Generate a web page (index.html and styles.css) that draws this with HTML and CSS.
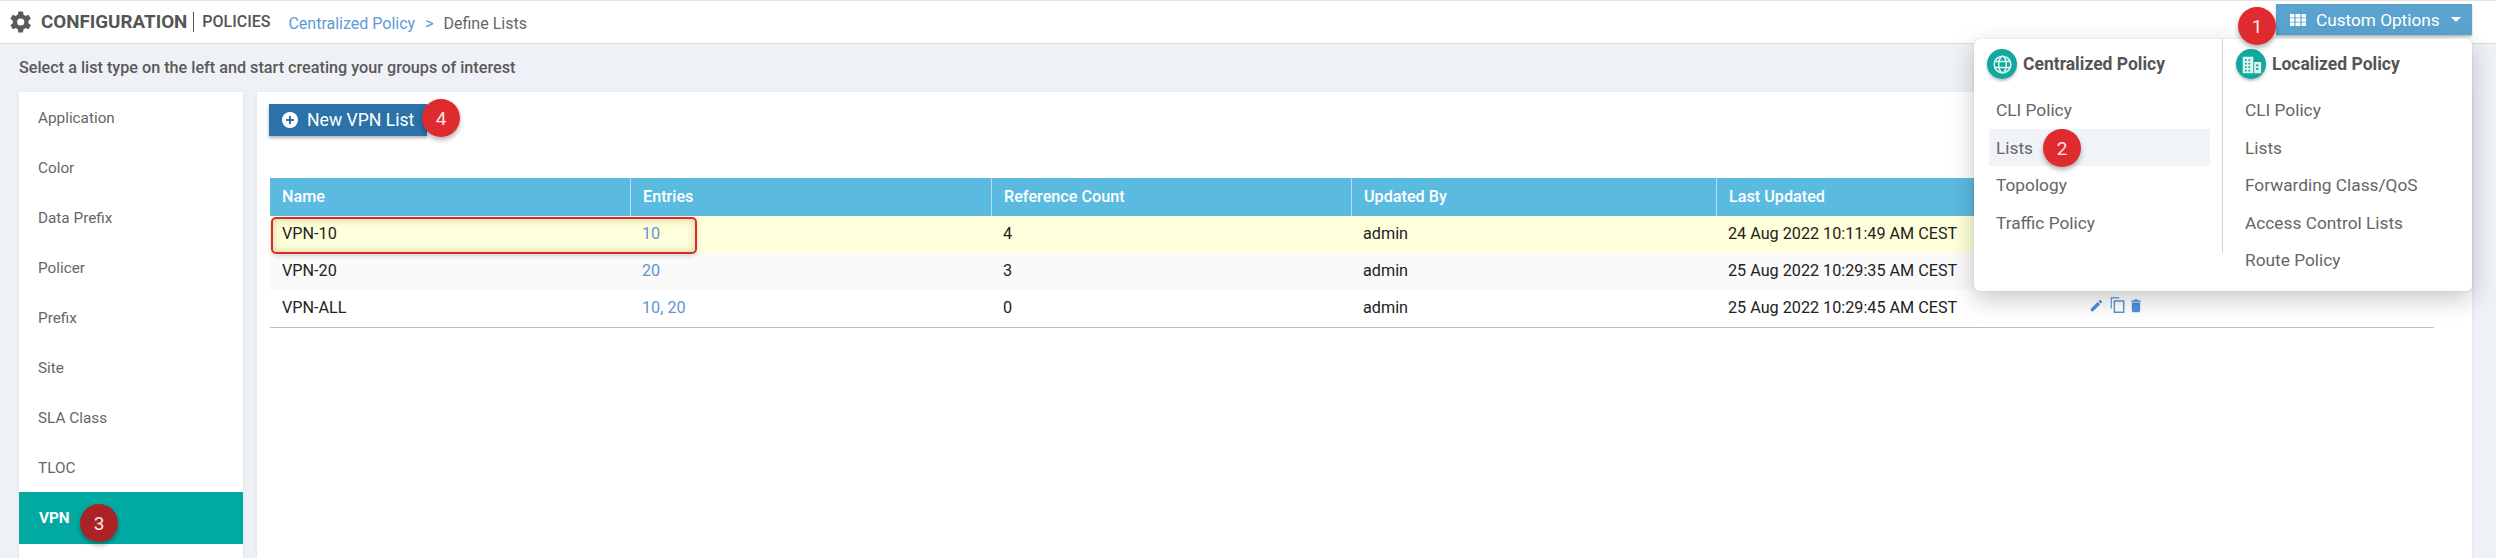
FILE: index.html
```html
<!DOCTYPE html>
<html lang="en">
<head>
<meta charset="utf-8">
<title>Define Lists</title>
<link rel="stylesheet" href="styles.css">
</head>
<body>
<header class="topbar">
  <svg class="gear" viewBox="0 0 24 24"><path fill="#5a5a5a" d="M19.4 13.2c.1-.4.1-.8.1-1.2s0-.8-.1-1.2l2.5-2-2.4-4.1-3 1.2c-.6-.5-1.3-.9-2-1.2L14 1.5H9.3l-.5 3.2c-.7.3-1.4.7-2 1.2l-3-1.2-2.4 4.1 2.5 2c-.1.4-.1.8-.1 1.2s0 .8.1 1.2l-2.5 2 2.4 4.1 3-1.2c.6.5 1.3.9 2 1.2l.5 3.2H14l.5-3.2c.7-.3 1.4-.7 2-1.2l3 1.2 2.4-4.1-2.5-2zM11.7 15.6a3.6 3.6 0 1 1 0-7.2 3.6 3.6 0 0 1 0 7.2z"/></svg>
  <span class="title">CONFIGURATION</span>
  <span class="title-sub">POLICIES</span>
  <nav class="crumbs"><a class="crumb-link">Centralized Policy</a><span class="crumb-sep">&gt;</span><span class="crumb-now">Define Lists</span></nav>
  <button class="options-btn">
    <svg class="grid-icon" viewBox="0 0 16 12"><path fill="#fff" d="M0 0h4.4v3.4H0zM5.6 0h4.8v3.4H5.6zM11.6 0H16v3.4h-4.4zM0 4.3h4.4v3.4H0zM5.6 4.3h4.8v3.4H5.6zM11.6 4.3H16v3.4h-4.4zM0 8.6h4.4V12H0zM5.6 8.6h4.8V12H5.6zM11.6 8.6H16V12h-4.4z"/></svg>
    <span>Custom Options</span>
    <i class="caret"></i>
  </button>
</header>

<p class="hint">Select a list type on the left and start creating your groups of interest</p>

<div class="content">
  <aside class="sidebar">
    <div class="side-item">Application</div>
    <div class="side-item">Color</div>
    <div class="side-item">Data Prefix</div>
    <div class="side-item">Policer</div>
    <div class="side-item">Prefix</div>
    <div class="side-item">Site</div>
    <div class="side-item">SLA Class</div>
    <div class="side-item">TLOC</div>
    <div class="side-item active">VPN</div>
  </aside>

  <main class="panel">
    <button class="new-btn">
      <svg class="plus-icon" viewBox="0 0 16 16"><circle cx="8" cy="8" r="8" fill="#fff"/><path fill="#2a72a8" d="M7 4h2v3h3v2H9v3H7V9H4V7h3z"/></svg>
      <span>New VPN List</span>
    </button>
    <div class="table">
      <div class="row head">
        <div class="cell">Name</div><div class="cell">Entries</div><div class="cell">Reference Count</div><div class="cell">Updated By</div><div class="cell">Last Updated</div><div class="cell"></div>
      </div>
      <div class="row yellow">
        <div class="cell">VPN-10</div><div class="cell link">10</div><div class="cell">4</div><div class="cell">admin</div><div class="cell">24 Aug 2022 10:11:49 AM CEST</div><div class="cell"></div>
      </div>
      <div class="row grey">
        <div class="cell">VPN-20</div><div class="cell link">20</div><div class="cell">3</div><div class="cell">admin</div><div class="cell">25 Aug 2022 10:29:35 AM CEST</div><div class="cell"></div>
      </div>
      <div class="row">
        <div class="cell">VPN-ALL</div><div class="cell link">10, 20</div><div class="cell">0</div><div class="cell">admin</div><div class="cell">25 Aug 2022 10:29:45 AM CEST</div>
        <div class="cell actions">
          <svg class="act act-edit" viewBox="0 0 24 24"><path fill="#4a8fe0" d="M3 17.2V21h3.8L17.8 9.9l-3.7-3.7zM20.7 7c.4-.4.4-1 0-1.400l-2.300-2.300c-.4-.4-1-.4-1.400 0l-1.800 1.800 3.700 3.700z"/></svg>
          <svg class="act act-copy" viewBox="0 0 16 18"><path fill="none" stroke="#5b93d8" stroke-width="1.300" d="M1 13V1h9"/><path fill="none" stroke="#5b93d8" stroke-width="1.600" d="M4.500 4.500h10.500v12.700H4.500z"/></svg>
          <svg class="act act-trash" viewBox="0 0 12 16"><path fill="#4a8fe0" d="M1 4.500h10V14c0 1-.8 2-2 2H3c-1.200 0-2-1-2-2zM0 2h3.500l.8-1.500h3.400L8.500 2H12v1.500H0z"/></svg>
        </div>
      </div>
    </div>
  </main>
</div>

<div class="menu">
  <section class="menu-col left">
    <h3 class="menu-head">
      <span class="menu-badge"><svg viewBox="0 0 24 24"><g fill="none" stroke="#dff5f2" stroke-width="1.800"><circle cx="12" cy="12" r="9.500"/><ellipse cx="12" cy="12" rx="4.300" ry="9.500"/><path d="M3 8.500h18M3 15.500h18"/></g></svg></span>
      Centralized Policy
    </h3>
    <div class="menu-item">CLI Policy</div>
    <div class="menu-item on">Lists</div>
    <div class="menu-item">Topology</div>
    <div class="menu-item">Traffic Policy</div>
  </section>
  <section class="menu-col right">
    <h3 class="menu-head">
      <span class="menu-badge"><svg viewBox="0 0 24 24"><path fill="#dff5f2" fill-rule="evenodd" d="M2 3h12v19H2zM15 9h8v13h-8zM4.500 6v2h2V6zM8.500 6v2h2V6zM4.500 10v2h2v-2zM8.500 10v2h2v-2zM4.500 14v2h2v-2zM8.500 14v2h2v-2zM4.500 18v2h2v-2zM8.500 18v2h2v-2zM17 12v2h3v-2zM17 16v2h3v-2z"/></svg></span>
      Localized Policy
    </h3>
    <div class="menu-item">CLI Policy</div>
    <div class="menu-item">Lists</div>
    <div class="menu-item">Forwarding Class/QoS</div>
    <div class="menu-item">Access Control Lists</div>
    <div class="menu-item">Route Policy</div>
  </section>
</div>

<div class="mark-box"></div>
<span class="step step-1">1</span>
<span class="step step-2">2</span>
<span class="step step-3">3</span>
<span class="step step-4">4</span>
</body>
</html>
```
FILE: styles.css
```css
* { box-sizing: border-box; }
html, body { margin: 0; height: 558px; overflow: hidden; }
body {
  position: relative;
  background: #eef1f6;
  font-family: Roboto, "Liberation Sans", sans-serif;
  color: #555;
}
.topbar {
  height: 44px;
  background: #fff;
  border-top: 1px solid #e3e3e3;
  border-bottom: 1px solid #d9dce0;
  display: flex;
  align-items: center;
  padding-left: 9px;
}
.gear { width: 24px; height: 24px; margin-right: 8px; }
.title { font-size: 18.800px; font-weight: 700; color: #555; }
.title-sub {
  font-size: 16px; font-weight: 500; color: #555;
  margin-left: 6px; padding-left: 8px; border-left: 1px solid #555; line-height: 20px;
}
.crumbs { margin-left: 18px; margin-top: 2px; font-size: 16px; display: flex; }
.crumb-link { color: #5b9bd5; }
.crumb-sep { color: #5b9bd5; margin: 0 10px; }
.crumb-now { color: #666; }
.options-btn {
  margin-left: auto;
  margin-right: 24px;
  margin-top: -5px;
  width: 196px;
  height: 31px;
  border: 0;
  background: #5aa3cf;
  color: #fff;
  font: 17.200px Roboto, sans-serif;
  display: flex;
  align-items: center;
  padding: 0 0 0 14px;
  box-shadow: 0 2px 2px rgba(0,0,0,.25);
}
.grid-icon { width: 16px; height: 12px; margin-right: 10px; }
.caret {
  margin-left: 11px;
  border-left: 5px solid transparent;
  border-right: 5px solid transparent;
  border-top: 5px solid #fff;
}
.hint {
  margin: 0;
  height: 48px;
  padding: 14px 0 0 19px;
  font-size: 16.200px;
  line-height: 19px;
  font-weight: 500;
  color: #5a5a5a;
}
.content {
  display: flex;
  gap: 14px;
  padding: 0 24px 0 19px;
  height: 466px;
}
.sidebar {
  width: 224px;
  background: #fff;
  box-shadow: 0 1px 4px rgba(0,0,0,.08);
  padding-top: 1px;
}
.side-item {
  height: 50px;
  padding-left: 19px;
  display: flex;
  align-items: center;
  font-size: 15.300px;
  color: #666;
}
.side-item.active {
  height: 52px;
  margin-top: -1px;
  background: #00aaa3;
  color: #fff;
  font-weight: 700;
  padding-left: 20px;
}
.panel {
  flex: 1;
  background: #fff;
  box-shadow: 0 1px 4px rgba(0,0,0,.08);
  padding: 12px 38px 0 12px;
}
.new-btn {
  width: 158px;
  height: 32px;
  border: 0;
  background: #2a72a8;
  color: #fff;
  font: 17.600px Roboto, sans-serif;
  display: flex;
  align-items: center;
  padding: 0 0 0 13px;
  box-shadow: 0 2px 3px rgba(0,0,0,.3);
}
.plus-icon { width: 16px; height: 16px; margin-right: 9px; flex: none; }
.table {
  margin-top: 42px;
  margin-left: 1px;
  border-bottom: 1px solid #bdbdbd;
  font-size: 16.200px;
}
.row {
  display: grid;
  grid-template-columns: 360px 361px 360px 365px 360px 1fr;
  height: 37px;
  color: #222;
}
.cell { padding: 0 0 2px 12px; display: flex; align-items: center; }
.head { height: 38px; background: #5bbadf; color: #fff; font-weight: 500; }
.head .cell + .cell { border-left: 1px solid #b5e0f0; }
.yellow { background: #ffffdc; }
.grey { background: #fafafa; }
.link { color: #5f96d0; }
.actions { gap: 6px; padding: 0; margin-left: 13px; margin-top: -7px; }
.act-edit { width: 15px; height: 15px; }
.act-copy { width: 15px; height: 16px; }
.act-trash { width: 10px; height: 15px; }
.menu {
  position: absolute;
  left: 1974px;
  top: 39px;
  width: 498px;
  height: 252px;
  background: #fff;
  border-radius: 5px;
  box-shadow: 0 0 1px rgba(0,0,0,.35), 0 8px 24px rgba(0,0,0,.22);
  display: flex;
}
.menu-col { padding-top: 10px; }
.menu-col.left { width: 249px; height: 214px; border-right: 1px solid #d4d4d4; padding-left: 15px; padding-right: 12px; }
.menu-col.right { flex: 1; padding-left: 13px; padding-right: 11px; }
.menu-head {
  margin: 0 0 12px;
  height: 30px;
  display: flex;
  align-items: center;
  gap: 6px;
  font-size: 17.500px;
  font-weight: 700;
  color: #555;
}
.left .menu-head { margin-left: -2px; }
.menu-badge {
  width: 30px; height: 30px; border-radius: 50%;
  background: #12a89d;
  box-shadow: 0 2px 3px rgba(0,0,0,.25);
  display: flex; align-items: center; justify-content: center;
}
.menu-badge svg { width: 21px; height: 21px; }
.menu-item {
  height: 37.500px;
  padding: 1px 0 0 7px;
  display: flex;
  align-items: center;
  font-size: 17.300px;
  color: #666;
}
.right .menu-item { padding-left: 9px; }
.menu-item.on { background: #f0f3f7; }
.mark-box {
  position: absolute;
  left: 271px; top: 217px;
  width: 426px; height: 37px;
  border: 2px solid #d92b2b;
  border-radius: 5px;
  box-shadow: inset 0 0 10px rgba(130,120,40,.35), 0 2px 5px rgba(0,0,0,.15);
}
.step {
  position: absolute;
  width: 38px; height: 38px;
  border-radius: 50%;
  background: #df2a2f;
  color: #fbe5e5;
  font-size: 19px;
  display: flex; align-items: center; justify-content: center;
  box-shadow: 0 3px 5px rgba(0,0,0,.3);
}
.step-1 { left: 2238px; top: 7px; }
.step-2 { left: 2043px; top: 129px; }
.step-3 { left: 80px; top: 504px; background: #ac2326; }
.step-4 { left: 422px; top: 99px; }
```
